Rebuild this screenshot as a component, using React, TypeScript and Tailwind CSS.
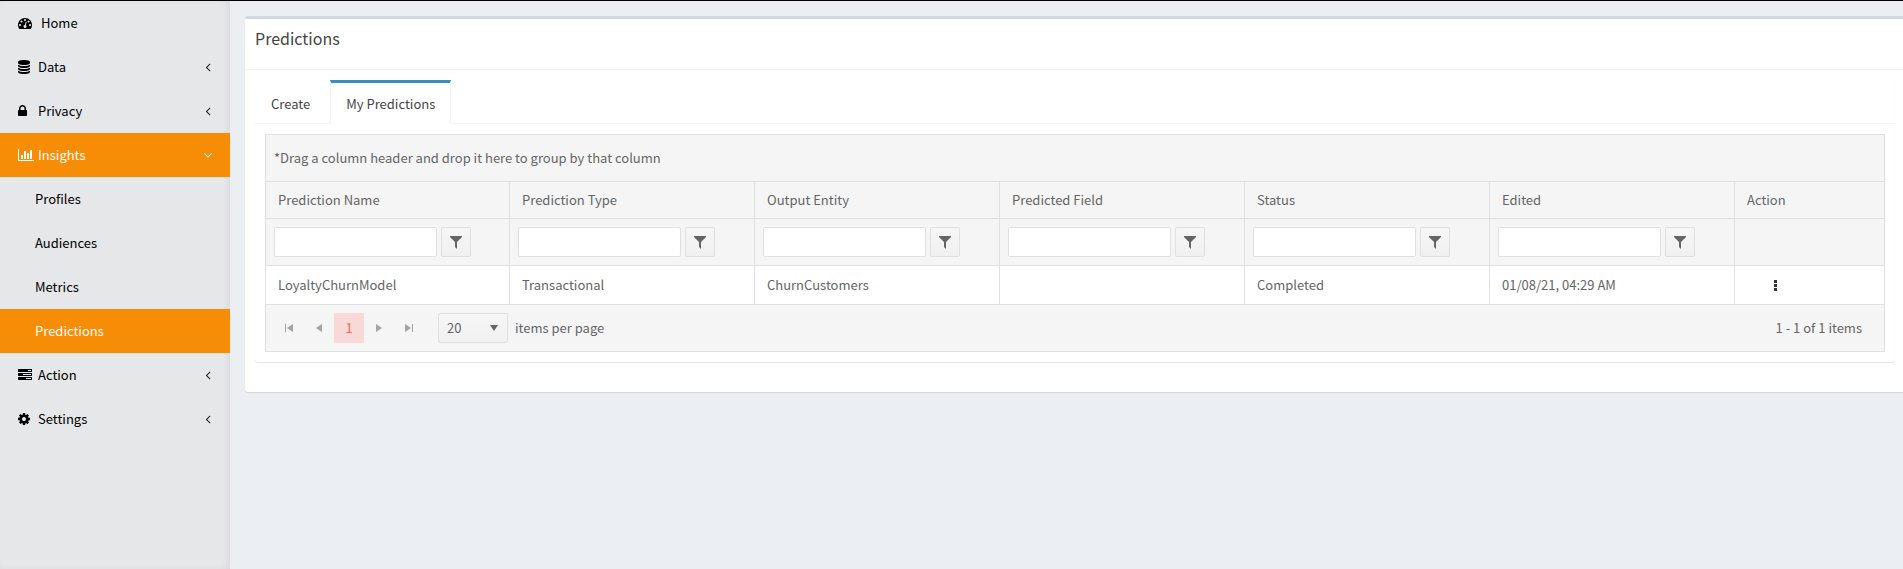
import { useState } from "react";
import clsx from "clsx";

const ICONS = {
  dashboard:
    "M384 1152q0-53-37.5-90.5t-90.5-37.5-90.5 37.5-37.5 90.5 37.5 90.5 90.5 37.5 90.5-37.5 37.5-90.5zm192-448q0-53-37.5-90.5t-90.5-37.5-90.5 37.5-37.5 90.5 37.5 90.5 90.5 37.5 90.5-37.5 37.5-90.5zm428 481l101-382q6-26-7.5-48.5t-38.5-29.5-48 6.5-30 39.5l-101 382q-60 5-107 43.5t-63 98.5q-20 77 20 146t117 89 146-20 89-117q16-60-6-117t-72-91zm660-33q0-53-37.5-90.5t-90.5-37.5-90.5 37.5-37.5 90.5 37.5 90.5 90.5 37.5 90.5-37.5 37.5-90.5zm-640-640q0-53-37.5-90.5t-90.5-37.5-90.5 37.5-37.5 90.5 37.5 90.5 90.5 37.5 90.5-37.5 37.5-90.5zm448 192q0-53-37.5-90.5t-90.5-37.5-90.5 37.5-37.5 90.5 37.5 90.5 90.5 37.5 90.5-37.5 37.5-90.5zm320 448q0 261-141 483-19 29-54 29h-1402q-35 0-54-29-141-221-141-483 0-182 71-348t191-286 286-191 348-71 348 71 286 191 191 286 71 348z",
  database:
    "M768 768q237 0 443-43t325-127v170q0 69-103 128t-280 93.5-385 34.5-385-34.5-280-93.5-103-128v-170q119 84 325 127t443 43zm0 768q237 0 443-43t325-127v170q0 69-103 128t-280 93.5-385 34.5-385-34.5-280-93.5-103-128v-170q119 84 325 127t443 43zm0-384q237 0 443-43t325-127v170q0 69-103 128t-280 93.5-385 34.5-385-34.5-280-93.5-103-128v-170q119 84 325 127t443 43zm0-1152q208 0 385 34.5t280 93.5 103 128v128q0 69-103 128t-280 93.5-385 34.5-385-34.5-280-93.5-103-128v-128q0-69 103-128t280-93.5 385-34.5z",
  lock: "M320 768h512v-192q0-106-75-181t-181-75-181 75-75 181v192zm832 96v576q0 40-28 68t-68 28h-960q-40 0-68-28t-28-68v-576q0-40 28-68t68-28h32v-192q0-184 132-316t316-132 316 132 132 316v192h32q40 0 68 28t28 68z",
  chart:
    "M640 896v512h-256v-512h256zm384-512v1024h-256v-1024h256zm1024 1152v128h-2048v-1536h128v1408h1920zm-640-896v768h-256v-768h256zm384-384v1152h-256v-1152h256z",
  server:
    "M1024 1408h640v-128h-640v128zm-384-512h1024v-128h-1024v128zm640-512h384v-128h-384v128zm512 832v256q0 26-19 45t-45 19h-1664q-26 0-45-19t-19-45v-256q0-26 19-45t45-19h1664q26 0 45 19t19 45zm0-512v256q0 26-19 45t-45 19h-1664q-26 0-45-19t-19-45v-256q0-26 19-45t45-19h1664q26 0 45 19t19 45zm0-512v256q0 26-19 45t-45 19h-1664q-26 0-45-19t-19-45v-256q0-26 19-45t45-19h1664q26 0 45 19t19 45z",
  cog: "M1024 896q0-106-75-181t-181-75-181 75-75 181 75 181 181 75 181-75 75-181zm512-109v222q0 12-8 23t-20 13l-185 28q-19 54-39 91 35 50 107 138 10 12 10 25t-9 23q-27 37-99 108t-94 71q-12 0-26-9l-138-108q-44 23-91 38-16 136-29 186-7 28-36 28h-222q-14 0-24.5-8.5t-11.5-21.5l-28-184q-49-16-90-37l-141 107q-10 9-25 9-14 0-25-11-126-114-165-168-7-10-7-23 0-12 8-23 15-21 51-66.5t54-70.5q-27-50-41-99l-183-27q-13-2-21-12.5t-8-23.5v-222q0-12 8-23t19-13l186-28q14-46 39-92-40-57-107-138-10-12-10-24 0-10 9-23 26-36 98.5-107.5t94.5-71.5q13 0 26 10l138 107q44-23 91-38 16-136 29-186 7-28 36-28h222q14 0 24.5 8.5t11.5 21.5l28 184q49 16 90 37l142-107q9-9 24-9 13 0 25 10 129 119 165 170 7 8 7 22 0 12-8 23-15 21-51 66.5t-54 70.5q26 50 41 98l183 28q13 2 21 12.5t8 23.5z",
  angleLeft:
    "M1203 544q0 13-10 23l-393 393 393 393q10 10 10 23t-10 23l-50 50q-10 10-23 10t-23-10l-466-466q-10-10-10-23t10-23l466-466q10-10 23-10t23 10l50 50q10 10 10 23z",
  angleDown:
    "M1395 736q0 13-10 23l-466 466q-10 10-23 10t-23-10l-466-466q-10-10-10-23t10-23l50-50q10-10 23-10t23 10l393 393 393-393q10-10 23-10t23 10l50 50q10 10 10 23z",
};

type IconName = keyof typeof ICONS;

function Icon({ name, className }: { name: IconName; className?: string }) {
  return (
    <svg
      viewBox="0 0 1792 1792"
      fill="currentColor"
      overflow="visible"
      aria-hidden="true"
      className={clsx("size-3.5 shrink-0", className)}
    >
      <path d={ICONS[name]} />
    </svg>
  );
}

type MenuItem = {
  label: string;
  icon: IconName;
  expandable?: boolean;
  iconWidth?: string;
  children?: string[];
};

const MENU: MenuItem[] = [
  { label: "Home", icon: "dashboard", iconWidth: "w-[23px]" },
  { label: "Data", icon: "database", expandable: true },
  { label: "Privacy", icon: "lock", expandable: true },
  {
    label: "Insights",
    icon: "chart",
    expandable: true,
    children: ["Profiles", "Audiences", "Metrics", "Predictions"],
  },
  { label: "Action", icon: "server", expandable: true },
  { label: "Settings", icon: "cog", expandable: true },
];

function Sidebar() {
  return (
    <nav className="w-[230px] shrink-0 bg-[#e5e7e8] text-black shadow-[inset_-3px_0_8px_-4px_rgba(0,0,0,0.12)]">
      <ul>
        {MENU.map((item) => {
          const open = Boolean(item.children);
          return (
            <li key={item.label}>
              <a
                href="#"
                className={clsx(
                  "flex h-11 items-center pr-[15px] pl-[18px]",
                  open && "bg-[#f78c06] text-white",
                )}
              >
                <span className={clsx("shrink-0", item.iconWidth ?? "w-5")}>
                  <Icon name={item.icon} />
                </span>
                <span className="flex-1">{item.label}</span>
                {item.expandable ? (
                  <Icon
                    name={open ? "angleDown" : "angleLeft"}
                    className={open ? "text-white" : "text-[#222]"}
                  />
                ) : null}
              </a>
              {item.children ? (
                <ul>
                  {item.children.map((child) => (
                    <li key={child}>
                      <a
                        href="#"
                        className={clsx(
                          "flex h-11 items-center pl-[35px]",
                          child === "Predictions" && "bg-[#f78c06] text-white",
                        )}
                      >
                        {child}
                      </a>
                    </li>
                  ))}
                </ul>
              ) : null}
            </li>
          );
        })}
      </ul>
    </nav>
  );
}

const COLUMNS = [
  "Prediction Name",
  "Prediction Type",
  "Output Entity",
  "Predicted Field",
  "Status",
  "Edited",
];

const ROWS = [
  [
    "LoyaltyChurnModel",
    "Transactional",
    "ChurnCustomers",
    "",
    "Completed",
    "01/08/21, 04:29 AM",
  ],
];

function FilterCell({ column }: { column: string }) {
  return (
    <td className="h-[47px] border-b border-l border-[#e0e0e0] px-2 first:border-l-0">
      <div className="flex gap-1">
        <input
          type="text"
          aria-label={`${column} filter`}
          className="h-[30px] w-[163px] min-w-0 rounded-xs border border-[#e0e0e0] bg-white px-2 outline-none"
        />
        <button
          type="button"
          aria-label={`Filter ${column}`}
          className="flex size-[30px] shrink-0 items-center justify-center rounded-xs border border-[#e0e0e0] bg-linear-to-b from-[#f6f6f6] to-[#f0f0f0] text-[#656565]"
        >
          <svg viewBox="0 0 12 13" fill="currentColor" className="h-[13px] w-3">
            <path d="M0 0h12v1L7 6v7L5 11V6L0 1z" />
          </svg>
        </button>
      </div>
    </td>
  );
}

function PagerButton({ label, path }: { label: string; path: string }) {
  return (
    <button
      type="button"
      aria-label={label}
      className="flex size-[30px] items-center justify-center text-[#a3a3a3]"
    >
      <svg viewBox="0 0 8 8" fill="currentColor" className="size-2">
        <path d={path} />
      </svg>
    </button>
  );
}

function Pager() {
  return (
    <div className="flex h-[46px] items-center bg-[#f5f5f5] pr-[22px] pl-2">
      <PagerButton label="First page" path="M0 0h1v8H0zM8 0v8L2 4z" />
      <PagerButton label="Previous page" path="M7 0v8L1 4z" />
      <button type="button" className="size-[30px] bg-[#f9d9d7] text-[#ff6358]">
        1
      </button>
      <PagerButton label="Next page" path="M1 0v8L7 4z" />
      <PagerButton label="Last page" path="M7 0h1v8H7zM0 0v8L6 4z" />
      <label className="ml-3.5 flex items-center gap-[7px]">
        <span className="relative">
          <select className="h-[30px] w-[70px] appearance-none rounded-xs border border-[#e0e0e0] bg-linear-to-b from-[#f6f6f6] to-[#f0f0f0] pl-2 outline-none">
            <option>20</option>
            <option>50</option>
            <option>100</option>
          </select>
          <svg
            viewBox="0 0 8 6"
            fill="currentColor"
            className="pointer-events-none absolute top-3 right-2.5 h-1.5 w-2"
          >
            <path d="M0 0h8L4 6z" />
          </svg>
        </span>
        items per page
      </label>
      <span className="ml-auto">1 - 1 of 1 items</span>
    </div>
  );
}

function PredictionsGrid() {
  return (
    <div className="border border-[#e0e0e0] text-[#656565]">
      <div className="flex h-[47px] items-center border-b border-[#e0e0e0] bg-[#f5f5f5] px-2">
        *Drag a column header and drop it here to group by that column
      </div>
      <table className="w-full table-fixed border-separate border-spacing-0 text-left">
        <colgroup>
          {COLUMNS.map((column, index) => (
            <col key={column} className={clsx(index === 0 && "w-[243px]")} />
          ))}
          <col className="w-[150px]" />
        </colgroup>
        <thead className="bg-[#f5f5f5]">
          <tr>
            {[...COLUMNS, "Action"].map((column) => (
              <th
                key={column}
                className="h-[37px] border-b border-l border-[#e0e0e0] px-3 font-normal first:border-l-0"
              >
                {column}
              </th>
            ))}
          </tr>
          <tr>
            {COLUMNS.map((column) => (
              <FilterCell key={column} column={column} />
            ))}
            <td className="border-b border-l border-[#e0e0e0]" />
          </tr>
        </thead>
        <tbody className="bg-white">
          {ROWS.map((row) => (
            <tr key={row[0]}>
              {row.map((value, index) => (
                <td
                  key={COLUMNS[index]}
                  className="h-[39px] border-b border-l border-[#e0e0e0] px-3 first:border-l-0"
                >
                  {value}
                </td>
              ))}
              <td className="border-b border-l border-[#e0e0e0] px-6">
                <button
                  type="button"
                  aria-label="Row actions"
                  className="flex w-8 justify-center text-[#333]"
                >
                  <svg viewBox="0 0 3 11" fill="currentColor" className="h-[11px] w-[3px]">
                    <path d="M0 0h3v3H0zM0 4h3v3H0zM0 8h3v3H0z" />
                  </svg>
                </button>
              </td>
            </tr>
          ))}
        </tbody>
      </table>
      <Pager />
    </div>
  );
}

export default function App() {
  const [tab, setTab] = useState("My Predictions");

  return (
    <div className="flex min-h-screen flex-col border-t border-black bg-[#ebeef3] font-['Noto_Sans_CJK_SC',sans-serif] text-[13px] leading-5 text-[#444]">
      <div className="flex flex-1">
        <Sidebar />
        <main className="min-w-0 flex-1 pt-[15px] pl-[15px]">
          <section className="rounded-l-[3px] border-t-3 border-[#d0d7e1] bg-white shadow-[0_1px_1px_rgba(0,0,0,0.1)]">
            <header className="h-[51px] border-b border-[#f4f4f4] px-2.5 pt-[7px]">
              <h1 className="text-base leading-6">Predictions</h1>
            </header>
            <div className="pt-2.5 pr-2 pb-[30px] pl-2.5">
              <div className="rounded-[3px] shadow-[0_1px_1px_rgba(0,0,0,0.1)]">
                <div role="tablist" className="flex gap-1 border-b border-[#f4f4f4]">
                  {["Create", "My Predictions"].map((name) => (
                    <button
                      key={name}
                      type="button"
                      role="tab"
                      aria-selected={tab === name}
                      onClick={() => setTab(name)}
                      className={clsx(
                        "-mb-px h-11 border-x border-t-3 px-[15px]",
                        tab === name
                          ? "border-x-[#f4f4f4] border-t-[#3c8dbc] bg-white"
                          : "border-x-transparent border-t-transparent",
                      )}
                    >
                      {name}
                    </button>
                  ))}
                </div>
                <div className="p-2.5">
                  <PredictionsGrid />
                </div>
              </div>
            </div>
          </section>
        </main>
      </div>
    </div>
  );
}
